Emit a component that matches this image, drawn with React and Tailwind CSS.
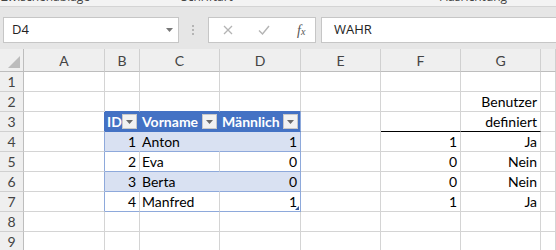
import React from 'react'

// Excel sheet snapshot: ribbon edge, formula bar, grid with a formatted table
const COLS = ['A', 'B', 'C', 'D', 'E', 'F', 'G', 'H']
const TABLE_COLS = ['B', 'C', 'D']

const DATA = {
  2: { G: { v: 'Benutzer', align: 'right' } },
  3: { B: { v: 'ID' }, C: { v: 'Vorname' }, D: { v: 'Männlich' }, G: { v: 'definiert', align: 'right' } },
  4: { B: { v: '1', align: 'right' }, C: { v: 'Anton' }, D: { v: '1', align: 'right' }, F: { v: '1', align: 'right' }, G: { v: 'Ja', align: 'right' } },
  5: { B: { v: '2', align: 'right' }, C: { v: 'Eva' }, D: { v: '0', align: 'right' }, F: { v: '0', align: 'right' }, G: { v: 'Nein', align: 'right' } },
  6: { B: { v: '3', align: 'right' }, C: { v: 'Berta' }, D: { v: '0', align: 'right' }, F: { v: '0', align: 'right' }, G: { v: 'Nein', align: 'right' } },
  7: { B: { v: '4', align: 'right' }, C: { v: 'Manfred' }, D: { v: '1', align: 'right' }, F: { v: '1', align: 'right' }, G: { v: 'Ja', align: 'right' } },
}

const GRID = 'grid grid-cols-[24px_81px_35px_80px_81px_80px_80px_80px_1fr]'

function clsxJoin(...parts) {
  return parts.filter(Boolean).join(' ')
}

function cellClass(r, c) {
  const inTable = r >= 3 && r <= 7 && TABLE_COLS.includes(c)
  const base = 'relative flex items-end border-r border-b'
  if (inTable && r === 3) {
    return clsxJoin(base, 'bg-[#4472c4] border-b-[#4472c4]', c === 'D' ? 'border-r-[#8ea9db]' : 'border-r-[#4472c4]')
  }
  if (inTable) {
    const band = r % 2 === 0
    return clsxJoin(
      base,
      'border-b-[#8ea9db]',
      band ? 'bg-[#d9e1f2]' : 'bg-white',
      c === 'D' ? 'border-r-[#8ea9db]' : band ? 'border-r-[#d9e1f2]' : 'border-r-[#d4d4d4]',
    )
  }
  if (r === 2 && TABLE_COLS.includes(c)) return clsxJoin(base, 'bg-white border-r-[#d4d4d4] border-b-[#4472c4]')
  if (c === 'A' && r === 3) return clsxJoin(base, 'bg-white border-r-[#4472c4] border-b-[#d4d4d4]')
  if (c === 'A' && r >= 4 && r <= 7) return clsxJoin(base, 'bg-white border-r-[#8ea9db] border-b-[#d4d4d4]')
  if (r === 3 && (c === 'F' || c === 'G')) return clsxJoin(base, 'bg-white border-r-[#d4d4d4] border-b-black')
  return clsxJoin(base, 'bg-white border-r-[#d4d4d4] border-b-[#d4d4d4]')
}

function FilterButton() {
  return (
    <span className="mr-[2px] mb-[2px] w-[15px] h-[15px] bg-[#f2f2f2] border border-[#c8c8c8] flex items-center justify-center">
      <svg width="7" height="4" viewBox="0 0 7 4">
        <path d="M0 0h7L3.5 4z" fill="#6b6b6b" />
      </svg>
    </span>
  )
}

function Cell({ r, c }) {
  const cell = DATA[r]?.[c]
  const isHeader = r === 3 && TABLE_COLS.includes(c)
  return (
    <div className={cellClass(r, c)}>
      {isHeader ? (
        <div className="flex-1 flex items-end justify-between">
          <span className="pl-[2px] leading-[18px] font-bold text-white whitespace-nowrap">{cell.v}</span>
          <FilterButton />
        </div>
      ) : cell ? (
        <span
          className={clsxJoin(
            'flex-1 leading-[18px] whitespace-nowrap',
            cell.align === 'right' ? 'text-right pr-[3px]' : 'pl-[2px]',
          )}
        >
          {cell.v}
        </span>
      ) : null}
      {r === 7 && c === 'D' && (
        <svg className="absolute right-[1px] bottom-[1px]" width="4" height="4" viewBox="0 0 4 4">
          <path d="M4 0v4H0z" fill="#2f5597" />
        </svg>
      )}
    </div>
  )
}

function RibbonEdge() {
  return (
    <div className="h-[7px] bg-[#f3f3f3] border-b border-[#d4d4d4] overflow-hidden relative font-['Open_Sans',sans-serif] text-[12px] text-[#444]">
      <div className="flex items-start -mt-[11px] leading-[16px] whitespace-nowrap">
        <span className="ml-[1px]">Zwischenablage</span>
        <span className="ml-[4px] mt-[2px] w-[7px] h-[7px] border-r border-b border-[#666]" />
        <span className="ml-[80px]">Schriftart</span>
        <span className="ml-[85px] mt-[2px] w-[7px] h-[7px] border-r border-b border-[#666]" />
        <span className="ml-[115px]">Ausrichtung</span>
      </div>
    </div>
  )
}

function FormulaBar() {
  return (
    <div className="h-[42px] bg-[#e6e6e6] flex items-start pt-[10px] font-['Open_Sans',sans-serif] text-[13px] text-[#222]">
      <div className="ml-[3px] w-[176px] h-[26px] bg-white border border-[#c6c6c6] flex items-center justify-between pl-[8px] pr-[5px]">
        <span>D4</span>
        <svg width="7" height="4" viewBox="0 0 7 4">
          <path d="M0 0h7L3.5 4z" fill="#777" />
        </svg>
      </div>
      <div className="ml-[13px] mt-[8px] flex flex-col gap-[2px]">
        <span className="w-[2px] h-[2px] bg-[#b5b5b5]" />
        <span className="w-[2px] h-[2px] bg-[#b5b5b5]" />
        <span className="w-[2px] h-[2px] bg-[#b5b5b5]" />
      </div>
      <div className="ml-[14px] w-[108px] h-[26px] bg-white border border-[#c6c6c6] flex items-center">
        <svg className="ml-[14px]" width="10" height="10" viewBox="0 0 10 10">
          <path d="M1 1l8 8M9 1l-8 8" stroke="#b4b4b4" strokeWidth="1.3" />
        </svg>
        <svg className="ml-[25px]" width="12" height="10" viewBox="0 0 12 10">
          <path d="M1 5.5l3.5 3.5L11 1" stroke="#b4b4b4" strokeWidth="1.4" fill="none" />
        </svg>
        <span className="ml-[27px] font-['Liberation_Serif',serif] italic text-[14px] text-[#555]">
          f<span className="text-[10px]">x</span>
        </span>
      </div>
      <div className="ml-[5px] flex-1 h-[26px] bg-white border border-r-0 border-[#c6c6c6] flex items-center pl-[12px]">
        WAHR
      </div>
    </div>
  )
}

function ColumnHeader() {
  return (
    <div className={clsxJoin(GRID, 'h-[23px]')}>
      <div className="bg-[#efefef] border-r border-b border-[#bdbdbd] relative">
        <svg className="absolute right-[3px] bottom-[3px]" width="12" height="12" viewBox="0 0 12 12">
          <path d="M12 0v12H0z" fill="#bcbcbc" />
        </svg>
      </div>
      {COLS.map(c => (
        <div
          key={c}
          className="bg-[#efefef] border-r border-r-[#d0d0d0] border-b border-b-[#bdbdbd] flex items-end justify-center pb-[1px] leading-[18px] text-[#444]"
        >
          {c === 'H' ? '' : c}
        </div>
      ))}
    </div>
  )
}

export default function App() {
  const rows = [1, 2, 3, 4, 5, 6, 7, 8, 9]
  return (
    <div className="w-[556px] h-[250px] overflow-hidden bg-white">
      <RibbonEdge />
      <FormulaBar />
      <div className="font-['Lato','Liberation_Sans',sans-serif] text-[14px] text-black">
        <ColumnHeader />
        {rows.map(r => (
          <div key={r} className={clsxJoin(GRID, 'h-5')}>
            <div className="bg-[#efefef] border-r border-r-[#bdbdbd] border-b border-b-[#d0d0d0] flex items-end justify-center leading-[18px] text-[#444]">
              {r}
            </div>
            {COLS.map(c => (
              <Cell key={c} r={r} c={c} />
            ))}
          </div>
        ))}
      </div>
    </div>
  )
}
